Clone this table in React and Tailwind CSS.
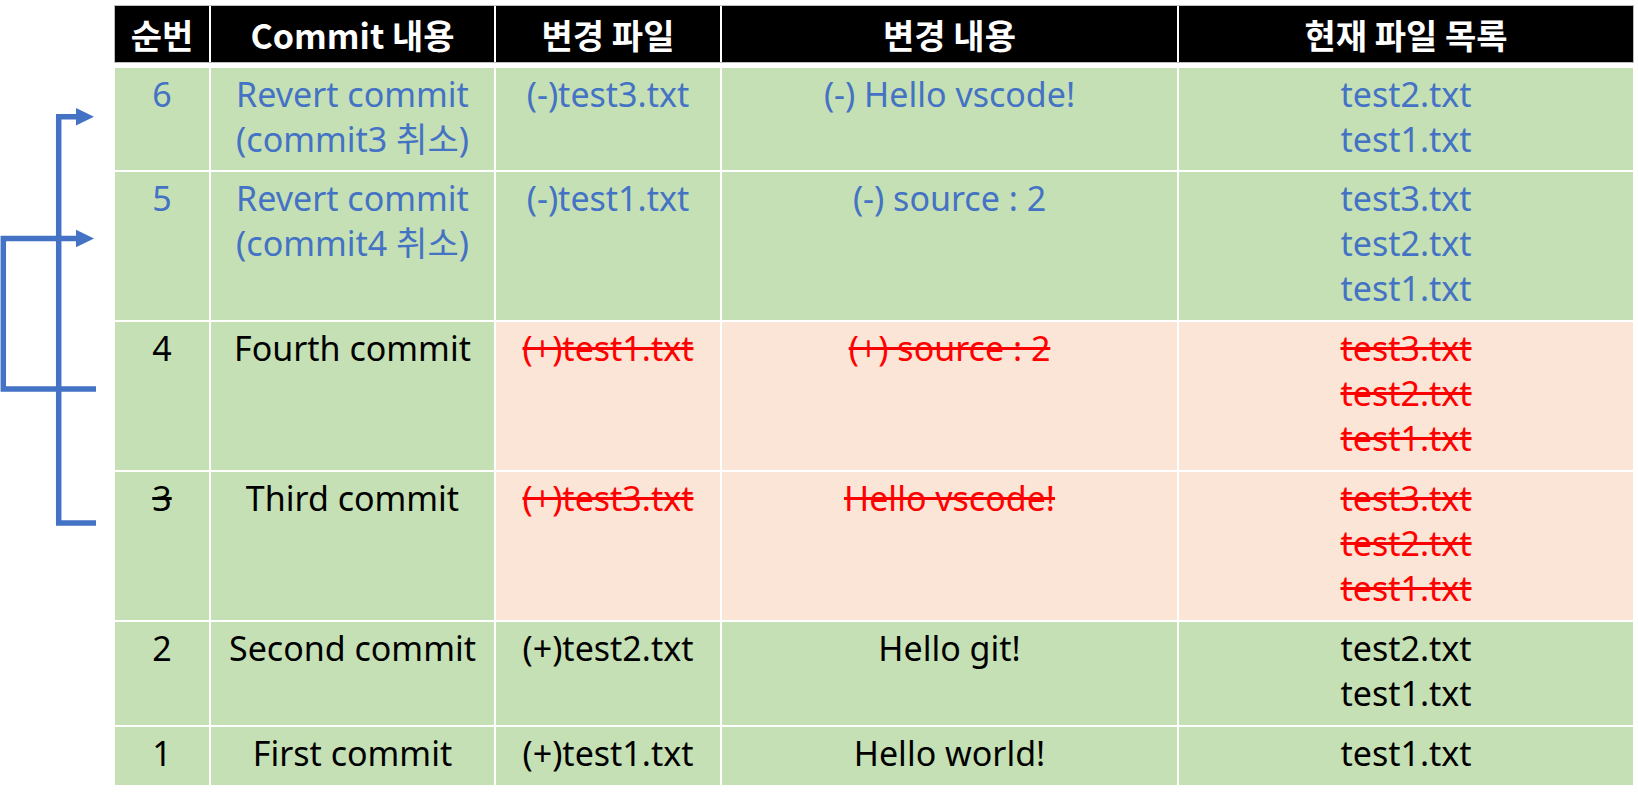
import React from 'react';

const BLUE = 'text-[#4472C4]';
const RED = 'text-[#FF0000] line-through decoration-[#FF0000]';

const rows = [
  {
    h: 'h-[102px]',
    no: '6',
    noCls: BLUE,
    commit: ['Revert commit', '(commit3 취소)'],
    commitCls: BLUE,
    file: '(-)test3.txt',
    change: '(-) Hello vscode!',
    bodyCls: BLUE,
    bg: 'bg-[#C5E0B4]',
    files: ['test2.txt', 'test1.txt'],
    filesCls: BLUE,
  },
  {
    h: 'h-[148px]',
    no: '5',
    noCls: BLUE,
    commit: ['Revert commit', '(commit4 취소)'],
    commitCls: BLUE,
    file: '(-)test1.txt',
    change: '(-) source : 2',
    bodyCls: BLUE,
    bg: 'bg-[#C5E0B4]',
    files: ['test3.txt', 'test2.txt', 'test1.txt'],
    filesCls: BLUE,
  },
  {
    h: 'h-[148px]',
    no: '4',
    noCls: 'text-black',
    commit: ['Fourth commit'],
    commitCls: 'text-black',
    file: '(+)test1.txt',
    change: '(+) source : 2',
    bodyCls: RED,
    bg: 'bg-[#FBE5D6]',
    files: ['test3.txt', 'test2.txt', 'test1.txt'],
    filesCls: RED,
  },
  {
    h: 'h-[148px]',
    no: '3',
    noCls: 'text-black line-through',
    commit: ['Third commit'],
    commitCls: 'text-black',
    file: '(+)test3.txt',
    change: 'Hello vscode!',
    bodyCls: RED,
    bg: 'bg-[#FBE5D6]',
    files: ['test3.txt', 'test2.txt', 'test1.txt'],
    filesCls: RED,
  },
  {
    h: 'h-[103px]',
    no: '2',
    noCls: 'text-black',
    commit: ['Second commit'],
    commitCls: 'text-black',
    file: '(+)test2.txt',
    change: 'Hello git!',
    bodyCls: 'text-black',
    bg: 'bg-[#C5E0B4]',
    files: ['test2.txt', 'test1.txt'],
    filesCls: 'text-black',
  },
  {
    h: 'h-[58px]',
    no: '1',
    noCls: 'text-black',
    commit: ['First commit'],
    commitCls: 'text-black',
    file: '(+)test1.txt',
    change: 'Hello world!',
    bodyCls: 'text-black',
    bg: 'bg-[#C5E0B4]',
    files: ['test1.txt'],
    filesCls: 'text-black',
  },
];

const headers = ['순번', 'Commit 내용', '변경 파일', '변경 내용', '현재 파일 목록'];

function Cell({ bg, children }) {
  return <div className={`${bg} text-center pt-[4px]`}>{children}</div>;
}

function Arrows() {
  return (
    <svg width="115" height="801" className="shrink-0">
      <g fill="none" stroke="#4472C4" strokeWidth="5.5">
        <path d="M96 523 H58.7 V116.8 H80" />
        <path d="M96 389 H3.3 V238.5 H80" />
      </g>
      <polygon points="76,108 94,116.8 76,125.6" fill="#4472C4" />
      <polygon points="76,229.7 94,238.5 76,247.3" fill="#4472C4" />
    </svg>
  );
}

export default function App() {
  return (
    <div className="flex w-[1638px] h-[801px] bg-white font-['Noto_Sans','Noto_Sans_CJK_KR',sans-serif]">
      <Arrows />
      <div className="mt-[6px] w-[1518px]">
        <div className="grid grid-cols-[94px_283px_224px_455px_454px] gap-x-[2px] h-[56px] outline outline-1 outline-[#bfbfbf]">
          {headers.map((h) => (
            <div key={h} className="bg-black text-white font-bold text-[34px] flex items-center justify-center font-['Noto_Sans_CJK_KR','Noto_Sans',sans-serif]">
              {h}
            </div>
          ))}
        </div>
        <div className="mt-[6px] flex flex-col gap-y-[2px] text-[34px] leading-[45px]">
          {rows.map((r) => (
            <div key={r.no} className={`grid grid-cols-[94px_283px_224px_455px_454px] gap-x-[2px] ${r.h}`}>
              <Cell bg="bg-[#C5E0B4]">
                <span className={r.noCls}>{r.no}</span>
              </Cell>
              <Cell bg="bg-[#C5E0B4]">
                {r.commit.map((c) => (
                  <div key={c} className={r.commitCls}>{c}</div>
                ))}
              </Cell>
              <Cell bg={r.bg}>
                <span className={r.bodyCls}>{r.file}</span>
              </Cell>
              <Cell bg={r.bg}>
                <span className={r.bodyCls}>{r.change}</span>
              </Cell>
              <Cell bg={r.bg}>
                {r.files.map((f) => (
                  <div key={f}>
                    <span className={r.filesCls}>{f}</span>
                  </div>
                ))}
              </Cell>
            </div>
          ))}
        </div>
      </div>
    </div>
  );
}
